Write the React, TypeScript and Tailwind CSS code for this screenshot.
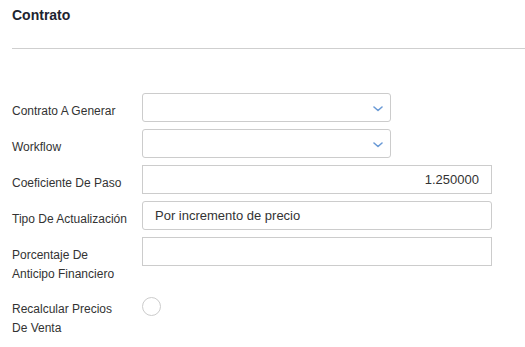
import React from 'react';

const Chevron = () => (
  <svg width="10" height="6" viewBox="0 0 10 6" className="absolute right-[7px] top-[12px]">
    <path d="M1 1l4 3.5L9 1" fill="none" stroke="#6a9ad6" strokeWidth="1.6" strokeLinecap="round" strokeLinejoin="round" />
  </svg>
);

const Label = ({ children }: { children: React.ReactNode }) => (
  <label className="w-[130px] shrink-0 pr-1 pt-[9px] text-[12px] leading-[19px] text-[#333]">{children}</label>
);

const App = () => {
  return (
    <div className="w-[525px] h-[347px] bg-white font-['Liberation_Sans',Arial,sans-serif] overflow-hidden">
      <div className="pl-[12px] pt-[6px]">
        <h2 className="text-[14px] font-bold leading-[18px] text-[#1e2430]">Contrato</h2>
        <div className="mt-[24px] border-t border-[#cfcfcf]"></div>
      </div>

      <div className="pl-[12px] pt-[44px] flex flex-col gap-[7px]">
        <div className="flex items-start">
          <Label>Contrato A Generar</Label>
          <div className="relative w-[249px] h-[29px] rounded-[3px] border border-[#cccccc]">
            <Chevron />
          </div>
        </div>
        <div className="flex items-start">
          <Label>Workflow</Label>
          <div className="relative w-[249px] h-[29px] rounded-[3px] border border-[#cccccc]">
            <Chevron />
          </div>
        </div>
        <div className="flex items-start">
          <Label>Coeficiente De Paso</Label>
          <div className="w-[350px] h-[29px] border border-[#cccccc] flex items-center justify-end pr-[12px] text-[13px] text-[#333]">
            1.250000
          </div>
        </div>
        <div className="flex items-start">
          <Label>Tipo De Actualización</Label>
          <div className="w-[350px] h-[29px] rounded-[3px] border border-[#cccccc] flex items-center pl-[12px] text-[13px] text-[#333]">
            Por incremento de precio
          </div>
        </div>
        <div className="flex items-start">
          <Label>Porcentaje De<br />Anticipo Financiero</Label>
          <div className="w-[350px] h-[29px] border border-[#cccccc]"></div>
        </div>
        <div className="flex items-start">
          <Label>Recalcular Precios<br />De Venta</Label>
          <div className="mt-[6px] w-[19px] h-[19px] rounded-full border border-[#cccccc] bg-white"></div>
        </div>
      </div>
    </div>
  );
};

export default App;
